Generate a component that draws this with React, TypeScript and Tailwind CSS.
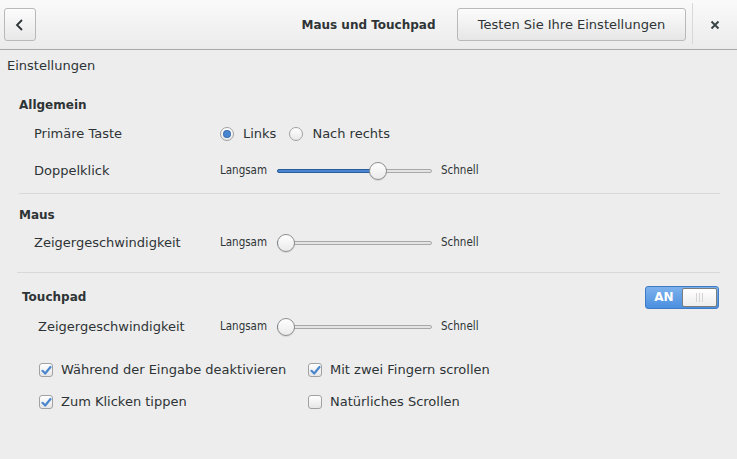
import React from 'react';

const font = { fontFamily: '"DejaVu Sans", "Liberation Sans", sans-serif' };

function Slider({ value }: { value: number }) {
  // track is 155px wide, knob 18px
  const pos = Math.round(value * 155);
  return (
    <div className="flex items-center">
      <span className="text-[11.5px] text-[#2e3436] [font-family:'DejaVu_Sans_Condensed','DejaVu_Sans',sans-serif]">
        Langsam
      </span>
      <div className="relative ml-[10px] mr-[9px] h-[18px] w-[155px]">
        <div className="absolute left-0 right-0 top-[7px] h-[4px] rounded-full border border-[#a8a8a8] bg-[#e4e4e4]" />
        <div
          className="absolute left-0 top-[7px] h-[4px] rounded-full border border-[#2a5f9e] bg-[#4a86cf]"
          style={{ width: pos }}
        />
        <div
          className="absolute top-0 h-[18px] w-[18px] rounded-full border border-[#8b8e8f] bg-gradient-to-b from-white to-[#eaeaea] shadow-[0_1px_1px_rgba(0,0,0,0.1)]"
          style={{ left: Math.max(0, pos - 9) }}
        />
      </div>
      <span className="text-[11.5px] text-[#2e3436] [font-family:'DejaVu_Sans_Condensed','DejaVu_Sans',sans-serif]">
        Schnell
      </span>
    </div>
  );
}

function Radio({ checked, label }: { checked?: boolean; label: string }) {
  return (
    <div className="flex items-center">
      <div className="flex h-[14px] w-[14px] items-center justify-center rounded-full border border-[#a1a1a1] bg-gradient-to-b from-white to-[#e8e8e8]">
        {checked && <div className="h-[6px] w-[6px] rounded-full bg-[#4a86cf] shadow-[0_0_0_1px_#3a6fb0]" />}
      </div>
      <span className="ml-[9px]">{label}</span>
    </div>
  );
}

function Check({ checked, label }: { checked?: boolean; label: string }) {
  return (
    <div className="flex items-center">
      <div className="flex h-[14px] w-[14px] items-center justify-center rounded-[3px] border border-[#a1a1a1] bg-gradient-to-b from-white to-[#e6e6e6]">
        {checked && (
          <svg width="11" height="11" viewBox="0 0 11 11">
            <path d="M1.5 5.8 L4.2 8.5 L9.5 2" fill="none" stroke="#4a86cf" strokeWidth="2.2" strokeLinecap="round" strokeLinejoin="round" />
          </svg>
        )}
      </div>
      <span className="ml-[8px]">{label}</span>
    </div>
  );
}

function Switch() {
  return (
    <div className="flex h-[23px] w-[74px] items-stretch rounded-[3px] border border-[#3d7cc5] bg-gradient-to-b from-[#7db1ec] to-[#4a8fe0]">
      <div className="flex w-[36px] items-center justify-center text-[12px] font-bold text-white">AN</div>
      <div className="my-[1px] mr-[1px] flex flex-1 items-center justify-center gap-[2px] rounded-[2px] border border-[#7a7d7e] bg-gradient-to-b from-white to-[#ededed]">
        <div className="h-[9px] w-[1px] bg-[#d4d4d4]" />
        <div className="h-[9px] w-[1px] bg-[#d4d4d4]" />
        <div className="h-[9px] w-[1px] bg-[#d4d4d4]" />
      </div>
    </div>
  );
}

export default function App() {
  return (
    <div className="h-[459px] w-[737px] overflow-hidden bg-[#ededed] text-[13px] text-[#2e3436]" style={font}>
      {/* header bar */}
      <div className="grid h-[50px] grid-cols-[1fr_auto_1fr] items-center border-b border-[#a9a9a9] bg-gradient-to-b from-[#fafafa] to-[#ebebeb]">
        <div className="flex pl-[4px]">
          <button className="flex h-[33px] w-[32px] items-center justify-center rounded-[3px] border border-[#b9b9b9] bg-gradient-to-b from-[#fcfcfc] to-[#e8e8e8]">
            <svg width="12" height="14" viewBox="0 0 12 14">
              <path d="M8 2 L3 7 L8 12" fill="none" stroke="#2e3436" strokeWidth="1.8" />
            </svg>
          </button>
        </div>
        <div className="text-[12px] font-bold">Maus und Touchpad</div>
        <div className="flex items-center justify-end self-stretch">
          <button className="flex h-[33px] w-[229px] items-center justify-center rounded-[3px] border border-[#b9b9b9] bg-gradient-to-b from-[#fcfcfc] to-[#e6e6e6]">
            Testen Sie Ihre Einstellungen
          </button>
          <div className="ml-[6px] mt-[-2px] h-[41px] w-px bg-[#d8d8d8]" />
          <div className="flex w-[44px] items-center justify-center">
            <svg width="10" height="10" viewBox="0 0 10 10">
              <path d="M1.5 1.5 L8.5 8.5 M8.5 1.5 L1.5 8.5" stroke="#3b4447" strokeWidth="2" />
            </svg>
          </div>
        </div>
      </div>

      <div className="flex h-[32px] items-center pl-[7px]">Einstellungen</div>

      <div className="pl-[19px] pr-[17px]">
        {/* Allgemein */}
        <div className="mt-[9px] flex h-[28px] items-center text-[12px] font-bold">Allgemein</div>
        <div className="flex h-[30px] items-center">
          <div className="w-[201px] pl-[15px]">Primäre Taste</div>
          <Radio checked label="Links" />
          <div className="ml-[13px]">
            <Radio label="Nach rechts" />
          </div>
        </div>
        <div className="mt-[4px] flex h-[36px] items-center">
          <div className="w-[201px] pl-[15px]">Doppelklick</div>
          <Slider value={0.65} />
        </div>
        <div className="mt-[4px] h-px bg-[#d9d9d9]" />

        {/* Maus */}
        <div className="mt-[7px] flex h-[28px] items-center text-[12px] font-bold">Maus</div>
        <div className="flex h-[28px] items-center">
          <div className="w-[201px] pl-[15px]">Zeigergeschwindigkeit</div>
          <Slider value={0} />
        </div>
        <div className="-ml-[2px] mt-[15px] h-px bg-[#d9d9d9]" />

        {/* Touchpad */}
        <div className="mt-[10px] flex h-[28px] items-center justify-between pl-[3px] pr-px">
          <span className="text-[12px] font-bold">Touchpad</span>
          <Switch />
        </div>
        <div className="mt-[2px] flex h-[28px] items-center">
          <div className="w-[201px] pl-[19px]">Zeigergeschwindigkeit</div>
          <Slider value={0} />
        </div>
        <div className="mt-[15px] grid h-[28px] grid-cols-[269px_1fr] items-center pl-[20px]">
          <Check checked label="Während der Eingabe deaktivieren" />
          <Check checked label="Mit zwei Fingern scrollen" />
        </div>
        <div className="mt-[4px] grid h-[28px] grid-cols-[269px_1fr] items-center pl-[20px]">
          <Check checked label="Zum Klicken tippen" />
          <Check label="Natürliches Scrollen" />
        </div>
      </div>
    </div>
  );
}
